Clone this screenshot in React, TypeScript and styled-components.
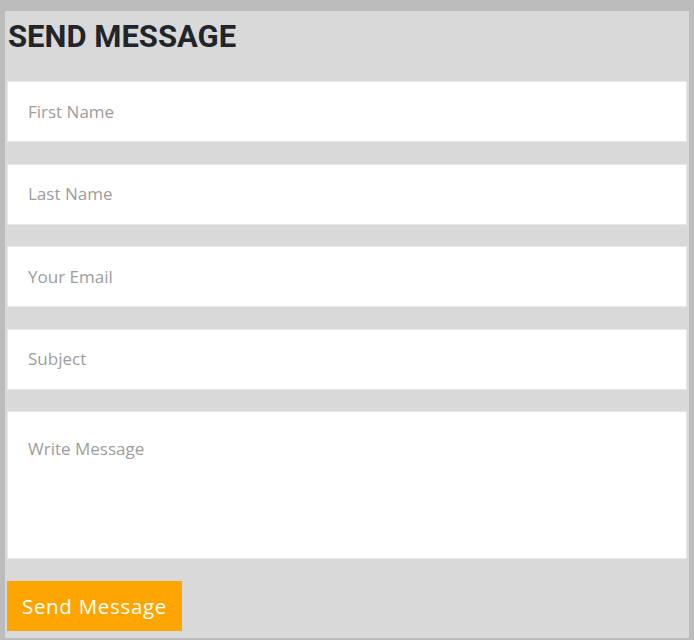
import styled, { createGlobalStyle } from 'styled-components'

const GlobalStyle = createGlobalStyle`
    body {
        margin: 0;
        background: #bcbcbc;
        font-family: "Open Sans", "Liberation Sans", sans-serif;
    }
`

const Page = styled.div`
    padding: 11px 5px 3px 5px;
`

const Panel = styled.form`
    background: #d9d9d9;
    padding: 0 2px 7px 2px;
    display: flex;
    flex-direction: column;
    gap: 21.5px;
`

const Title = styled.h2`
    margin: 0;
    padding: 8px 0 0 1px;
    height: 40.5px;
    font-family: Roboto, "Liberation Sans", sans-serif;
    font-weight: 700;
    font-size: 31px;
    line-height: 36px;
    color: #212529;
`

const Field = styled.input`
    box-sizing: border-box;
    width: 100%;
    height: 61px;
    margin: 0;
    padding: 0 20px 1px 20px;
    border: 1px solid #e8e8e8;
    background: #fff;
    font-family: "Open Sans", Lato, sans-serif;
    font-size: 17px;
    color: #555;
    outline: none;

    &::placeholder {
        color: #9d9d9d;
    }
`

const MessageBox = styled.textarea`
    box-sizing: border-box;
    width: 100%;
    height: 148px;
    margin: 0;
    padding: 26px 20px;
    border: 1px solid #e8e8e8;
    background: #fff;
    font-family: "Open Sans", Lato, sans-serif;
    font-size: 17px;
    line-height: 22px;
    color: #555;
    resize: none;
    outline: none;
    display: block;

    &::placeholder {
        color: #9d9d9d;
    }
`

const SendButton = styled.button`
    align-self: flex-start;
    width: 175px;
    height: 50px;
    border: 0;
    border-radius: 0;
    background: #ffa500;
    color: #fff;
    font-family: "Open Sans", Lato, sans-serif;
    font-size: 20.5px;
    letter-spacing: 0.7px;
    padding: 0;
    cursor: pointer;
`

const fields = ['First Name', 'Last Name', 'Your Email', 'Subject']

const App = () => {
    return (
        <>
            <GlobalStyle />
            <Page>
                <Panel onSubmit={(e) => e.preventDefault()}>
                    <Title>SEND MESSAGE</Title>
                    {fields.map((f) => (
                        <Field key={f} type="text" placeholder={f} />
                    ))}
                    <MessageBox placeholder="Write Message" />
                    <SendButton type="submit">Send Message</SendButton>
                </Panel>
            </Page>
        </>
    )
}

export default App
